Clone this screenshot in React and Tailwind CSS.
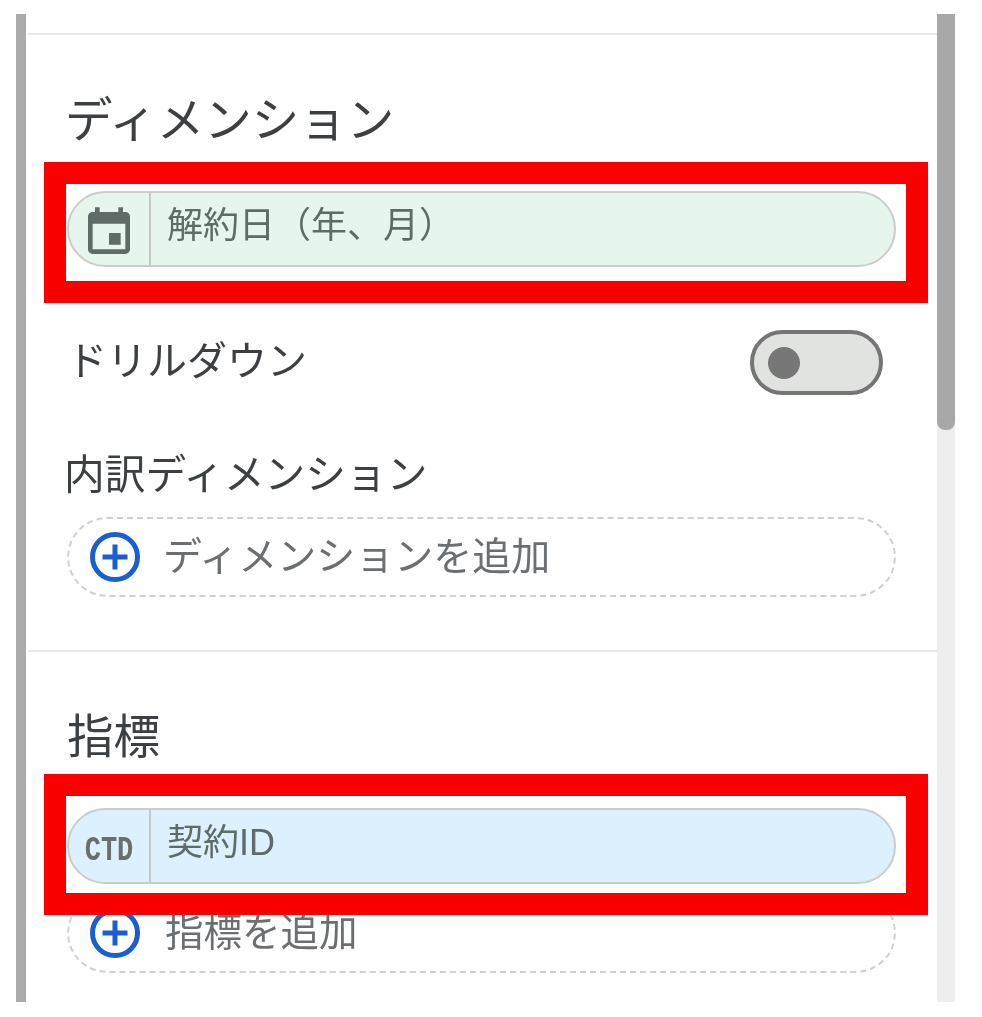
function PlusCircle() {
  return (
    <svg width="50" height="50" viewBox="0 0 50 50" className="shrink-0" fill="none" stroke="#1a5fd0">
      <circle cx="25" cy="25" r="22.5" strokeWidth="5" />
      <path d="M25 12.5v25M12.5 25h25" strokeWidth="5" />
    </svg>
  );
}

function CalendarIcon() {
  return (
    <svg width="56" height="56" viewBox="0 0 24 24" fill="#5f6b66" className="mt-[8px] -ml-[1px]">
      <path d="M17 12h-5v5h5v-5zM16 1v2H8V1H6v2H5c-1.11 0-1.99.9-1.99 2L3 19c0 1.1.89 2 2 2h14c1.1 0 2-.9 2-2V5c0-1.1-.9-2-2-2h-1V1h-2zm3 18H5V8h14v11z" />
    </svg>
  );
}

function Chip({ bg, icon, label, frame }) {
  return (
    <div className="relative h-[76px] w-[829px]">
      <div className={`flex h-full w-full overflow-hidden rounded-full border-2 border-[#c9cecc] ${bg}`}>
        <div className="flex w-[82px] shrink-0 items-center justify-center border-r-2 border-[#c4c9c7]">{icon}</div>
        <div className="flex items-center pb-[6px] pl-[16px] text-[36px] leading-none text-[#5f6b66]" style={{ fontFamily: '"Liberation Sans", "Noto Sans CJK JP", sans-serif' }}>{label}</div>
      </div>
      <div className={`absolute -right-[32px] -left-[23px] z-10 border-[22px] border-[#f80000] ${frame}`} />
    </div>
  );
}

function AddRow({ label, top, size }) {
  return (
    <div className={`flex h-[80px] w-[829px] items-center gap-[25px] rounded-[40px] border-2 border-dashed border-[#cfd1d1] pl-[21px] ${top}`}>
      <PlusCircle />
      <span className={`pb-[8px] leading-none text-[#6b6f72] ${size}`}>{label}</span>
    </div>
  );
}

export default function App() {
  return (
    <div className="h-[1017px] w-[982px] bg-white pt-[14px] pl-[16px] blur-[0.6px]" style={{ fontFamily: '"Noto Sans CJK JP", "Liberation Sans", sans-serif' }}>
      <div className="flex h-[988px] w-[939px]">
        <div className="w-[10px] shrink-0 bg-[#aaaaaa]" />
        <div className="flex min-w-0 flex-1 flex-col pl-[2px]">
          <div className="mt-[19px] border-t-2 border-[#e8e8e8] pl-[39px]">
            <h2 className="mt-[60px] mb-[46px] -ml-[2px] flex h-[50px] items-center pb-[6px] text-[47.5px] font-normal leading-none text-[#3c4043]">ディメンション</h2>
            <Chip bg="bg-[#e6f6ec]" icon={<CalendarIcon />} label="解約日（年、月）" frame="-top-[29px] -bottom-[36px]" />
            <div className="mt-[63px] flex h-[65px] w-[816px] items-center justify-between">
              <span className="pb-[10px] text-[40px] leading-none text-[#3c4043]">ドリルダウン</span>
              <div className="flex h-[65px] w-[133px] items-center rounded-full border-4 border-[#757575] bg-[#e1e3e1] pl-[14px]">
                <div className="h-[32px] w-[32px] rounded-full bg-[#777777]" />
              </div>
            </div>
            <div className="mt-[55px] -ml-[3px] flex h-[50px] items-center pb-[6px] text-[40.7px] leading-none text-[#3c4043]">内訳ディメンション</div>
            <AddRow label="ディメンションを追加" top="mt-[17px]" size="-ml-[2px] text-[39px]" />
          </div>
          <div className="mt-[53px] border-t-2 border-[#e8e8e8] pl-[39px]">
            <h2 className="mt-[60px] mb-[46px] flex h-[50px] items-center pb-[8px] text-[46.5px] font-normal leading-none text-[#3c4043]">指標</h2>
            <Chip
              bg="bg-[#dcf0fd]"
              icon={<span className="translate-y-[5px] scale-y-[1.3] text-[27px] font-bold leading-none text-[#66706c]" style={{ fontFamily: '"Liberation Mono", monospace' }}>CTD</span>}
              label="契約ID"
              frame="-top-[34px] -bottom-[31px]"
            />
            <AddRow label="指標を追加" top="mt-[9px]" size="text-[38.5px]" />
          </div>
        </div>
        <div className="w-[18px] shrink-0 bg-[#eeeeee]">
          <div className="h-[416px] rounded-b-[8px] bg-[#a8a8a8]" />
        </div>
      </div>
    </div>
  );
}
